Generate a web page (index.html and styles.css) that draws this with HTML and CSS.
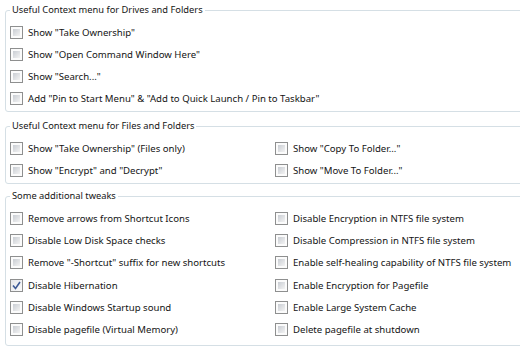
FILE: index.html
```html
<!DOCTYPE html>
<html lang="en">
  <head>
    <meta charset="UTF-8" />
    <title>Tweaks</title>
    <link rel="stylesheet" href="styles.css">
  </head>
  <body>
    <fieldset class="group group-drives">
      <legend>Useful Context menu for Drives and Folders</legend>
      <div class="options">
        <label class="option"><span class="box"></span>Show "Take Ownership"</label>
        <label class="option"><span class="box"></span>Show "Open Command Window Here"</label>
        <label class="option"><span class="box"></span>Show "Search..."</label>
        <label class="option"><span class="box"></span>Add "Pin to Start Menu" &amp; "Add to Quick Launch / Pin to Taskbar"</label>
      </div>
    </fieldset>

    <fieldset class="group group-files">
      <legend>Useful Context menu for Files and Folders</legend>
      <div class="options two-col">
        <label class="option"><span class="box"></span>Show "Take Ownership" (Files only)</label>
        <label class="option"><span class="box"></span>Show "Copy To Folder..."</label>
        <label class="option"><span class="box"></span>Show "Encrypt" and "Decrypt"</label>
        <label class="option"><span class="box"></span>Show "Move To Folder..."</label>
      </div>
    </fieldset>

    <fieldset class="group group-tweaks">
      <legend>Some additional tweaks</legend>
      <div class="options two-col">
        <label class="option"><span class="box"></span>Remove arrows from Shortcut Icons</label>
        <label class="option"><span class="box"></span>Disable Encryption in NTFS file system</label>
        <label class="option"><span class="box"></span>Disable Low Disk Space checks</label>
        <label class="option"><span class="box"></span>Disable Compression in NTFS file system</label>
        <label class="option"><span class="box"></span>Remove "-Shortcut" suffix for new shortcuts</label>
        <label class="option"><span class="box"></span>Enable self-healing capability of NTFS file system</label>
        <label class="option"><span class="box checked"><svg width="9" height="9" viewBox="0 0 9 9"><path d="M1 4.5 L3.5 7.5 L8 1" fill="none" stroke="#3d5a96" stroke-width="1.6"/></svg></span>Disable Hibernation</label>
        <label class="option"><span class="box"></span>Enable Encryption for Pagefile</label>
        <label class="option"><span class="box"></span>Disable Windows Startup sound</label>
        <label class="option"><span class="box"></span>Enable Large System Cache</label>
        <label class="option"><span class="box"></span>Disable pagefile (Virtual Memory)</label>
        <label class="option"><span class="box"></span>Delete pagefile at shutdown</label>
      </div>
    </fieldset>
  </body>
</html>
```

FILE: styles.css
```css
body {
  font-family: "Noto Sans", "Open Sans", sans-serif;
  font-size: 9.6px;
  color: #141414;
  background-color: white;
  margin: 0;
  overflow: hidden;
}
.group {
  border: 1px solid #d5dfe5;
  border-radius: 3px;
  margin: 0 -6px 0 5px;
  padding: 3px 0 2px 4px;
}
.group legend {
  padding: 0 2px;
  font-size: 9.3px;
  line-height: 16px;
  color: #141414;
}
.group-drives {
  margin-top: 2px;
}
.group-files {
  margin-top: 6px;
}
.group-tweaks {
  margin-top: 4px;
  padding-bottom: 4px;
}
.options {
  display: grid;
}
.two-col {
  grid-template-columns: 265px 1fr;
}
.option {
  display: flex;
  align-items: center;
  height: 22px;
  white-space: nowrap;
}
.group-tweaks .option {
  height: 22.3px;
}
.box {
  width: 13px;
  height: 13px;
  box-sizing: border-box;
  border: 1px solid #8e8f8f;
  padding: 2px;
  margin-right: 5px;
  flex-shrink: 0;
  display: flex;
  align-items: center;
  justify-content: center;
  background: linear-gradient(135deg, #c9cdd3, #f3f3f3) content-box, linear-gradient(#fbfbfb, #fbfbfb);
}
.box.checked {
  padding: 0;
  background: linear-gradient(135deg, #e4e6ea, #fbfbfb);
}
```
